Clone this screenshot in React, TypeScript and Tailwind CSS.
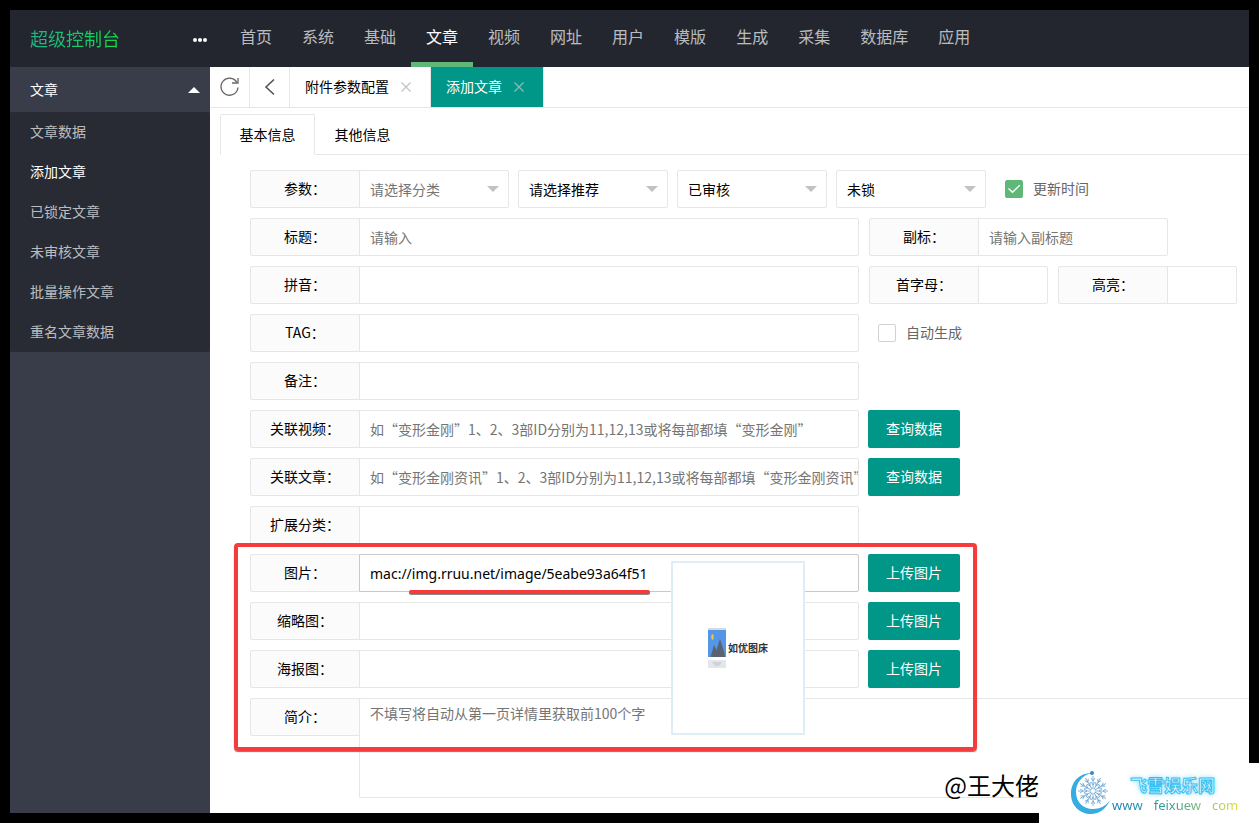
import { useState, type ReactNode } from 'react'

const NAV_ITEMS = ['首页', '系统', '基础', '文章', '视频', '网址', '用户', '模版', '生成', '采集', '数据库', '应用']
const SIDE_ITEMS = ['文章数据', '添加文章', '已锁定文章', '未审核文章', '批量操作文章', '重名文章数据']
const INNER_TABS = ['基本信息', '其他信息']

function RefreshIcon() {
  return (
    <svg width="22" height="22" viewBox="0 0 22 22" fill="none" stroke="#666" strokeWidth="1.3" aria-hidden="true">
      <path d="M19 11.500A8.500 8.500 0 1 1 17.800 6.300" />
      <path d="M19 2v5h-6" />
    </svg>
  )
}

function BackIcon() {
  return (
    <svg width="20" height="20" viewBox="0 0 20 20" fill="none" stroke="#555" strokeWidth="1.6" aria-hidden="true">
      <path d="M14 2.500 6 10l8 7.500" />
    </svg>
  )
}

function CloseIcon({ color }: { color: string }) {
  return (
    <svg width="10" height="10" viewBox="0 0 10 10" fill="none" stroke={color} strokeWidth="1.2" aria-hidden="true">
      <path d="M.5.5l9 9M9.500.5l-9 9" />
    </svg>
  )
}

interface WindowTabProps {
  label: string
  active?: boolean
}

function WindowTab({ label, active = false }: WindowTabProps) {
  return (
    <div
      className={`flex h-full items-center gap-3 border-r border-[#e6e6e6] pl-[15px] pr-[19px] ${
        active ? 'bg-[#009688] text-white' : 'bg-white text-black'
      }`}
    >
      <a href="#tab" className="pb-[2px]">
        {label}
      </a>
      <button type="button" aria-label={`关闭${label}`}>
        <CloseIcon color={active ? '#8fbdb6' : '#c2c2c2'} />
      </button>
    </div>
  )
}

function Row({ children }: { children: ReactNode }) {
  return <div className="flex items-start">{children}</div>
}

function FieldLabel({ id, children }: { id: string; children: ReactNode }) {
  return (
    <label
      htmlFor={id}
      className="flex h-[38px] w-[110px] shrink-0 items-center justify-center rounded-l-xs border border-[#e6e6e6] bg-[#fbfbfb] pb-[2px] text-black"
    >
      {children}
    </label>
  )
}

interface TextFieldProps {
  id: string
  label: string
  width?: string
  placeholder?: string
}

function TextField({ id, label, width = 'w-[500px]', placeholder }: TextFieldProps) {
  return (
    <div className="flex shrink-0">
      <FieldLabel id={id}>{label}</FieldLabel>
      <input
        id={id}
        type="text"
        placeholder={placeholder}
        className={`-ml-px h-[38px] ${width} rounded-r-xs border border-[#e6e6e6] bg-white pl-[10px] placeholder:text-[#757575] focus:outline-none`}
      />
    </div>
  )
}

interface SelectFieldProps {
  id: string
  name: string
  options: string[]
  muted?: boolean
}

function SelectField({ id, name, options, muted = false }: SelectFieldProps) {
  return (
    <div className="relative w-[150px] shrink-0">
      <select
        id={id}
        aria-label={name}
        className={`h-[38px] w-full appearance-none rounded-xs border border-[#e6e6e6] bg-white px-[10px] focus:outline-none ${
          muted ? 'text-[#757575]' : 'text-black'
        }`}
      >
        {options.map((o) => (
          <option key={o}>{o}</option>
        ))}
      </select>
      <span className="pointer-events-none absolute right-[10px] top-4 border-x-6 border-t-6 border-x-transparent border-t-[#c2c2c2]" />
    </div>
  )
}

function CheckField({ id, label, checked = false }: { id: string; label: string; checked?: boolean }) {
  return (
    <div className="flex h-[38px] shrink-0 items-center gap-[10px] text-[#666]">
      <span className="relative flex">
        <input
          id={id}
          type="checkbox"
          defaultChecked={checked}
          className="peer size-[18px] appearance-none rounded-xs border border-[#d2d2d2] bg-white checked:border-[#5fb878] checked:bg-[#5fb878]"
        />
        <svg
          className="pointer-events-none absolute inset-0 hidden peer-checked:block"
          width="18"
          height="18"
          viewBox="0 0 18 18"
          fill="none"
          stroke="#fff"
          strokeWidth="1.4"
          aria-hidden="true"
        >
          <path d="M3.500 8.500 7.500 12.300 14.800 5.200" />
        </svg>
      </span>
      <label htmlFor={id} className="pb-[2px]">
        {label}
      </label>
    </div>
  )
}

function ActionButton({ children }: { children: ReactNode }) {
  return (
    <button type="button" className="ml-[9px] h-[38px] w-[92px] shrink-0 rounded-xs bg-[#009688] pb-[2px] text-white">
      {children}
    </button>
  )
}

/** Floating preview of the picture behind the address in the 图片 field. */
function PicturePreview() {
  return (
    <div className="absolute left-[421px] top-[7px] z-10 flex h-[174px] w-[134px] items-center justify-center gap-[2px] border-2 border-[#deeef9] bg-white">
      <svg width="18" height="42" viewBox="0 0 18 42" aria-hidden="true">
        <rect y="1" width="18" height="3" fill="#d5d9e0" />
        <rect y="3" width="18" height="27" fill="#5596e6" />
        <ellipse cx="4.500" cy="10" rx="1.300" ry="3" fill="#e6c34a" />
        <path d="M2.500 30 6 18l2.500 5L12 12l4.500 14 .5 4z" fill="#5b6270" />
        <rect y="33" width="18" height="8" fill="#e3e6ea" />
        <path d="M4 35h10l-3 4H7z" fill="#cfd3d9" />
      </svg>
      <span className="text-[10px] font-bold text-[#333]">如优图床</span>
    </div>
  )
}

function SnowMoonLogo() {
  const arms = Array.from({ length: 12 }, (_, i) => i * 30)
  return (
    <svg width="40" height="44" viewBox="0 0 40 44" aria-hidden="true">
      <path
        d="M21 2C8 2 0 11 0 23c0 12 9 20 20 20 8 0 15-5 19-14-4 6-10 9-17 9C12 38 5 31 5 21 5 12 11 4 21 2z"
        fill="#35ace2"
      />
      <g stroke="#6aa3d0" strokeWidth="0.8" fill="none">
        {arms.map((deg) => (
          <path
            key={deg}
            d="M22 20V5M22 10l-2-3M22 10l2-3M22 14l-2-3M22 14l2-3"
            transform={`rotate(${deg} 22 20)`}
          />
        ))}
      </g>
      <circle cx="22" cy="20" r="2" fill="#fff" />
      <circle cx="21" cy="2" r="2" fill="#3c86bd" />
    </svg>
  )
}

function SiteBadge() {
  return (
    <div className="absolute bottom-0 right-0 z-20 flex h-[60px] w-[220px] items-center bg-white pl-8">
      <SnowMoonLogo />
      <div className="flex flex-col pl-px pt-1">
        <span className="pl-[18px] text-[17px] font-bold leading-5 text-[#e6faff] [-webkit-text-stroke:1px_#38bff2] [text-shadow:0_0_4px_#8fe0fc,0_0_6px_#a5e8ff]">
          飞雪娱乐网
        </span>
        <span className="flex gap-[11px] bg-gradient-to-r from-[#1780b8] via-[#38a08e] to-[#e0dc30] bg-clip-text font-['Noto_Sans'] text-[13px] leading-5 text-transparent">
          <span>www</span>
          <span>feixuew</span>
          <span>com</span>
        </span>
      </div>
    </div>
  )
}

export default function App() {
  const [nav, setNav] = useState('文章')
  const [innerTab, setInnerTab] = useState('基本信息')

  return (
    <div className="relative flex min-h-screen flex-col overflow-hidden bg-black p-[10px] font-['Noto_Sans_CJK_SC',sans-serif] text-[14px] leading-5">
      <header className="flex h-[57px] shrink-0 bg-[#23262e]">
        <div className="flex w-[215px] shrink-0 items-center justify-between pl-5 pr-[18px]">
          <h1 className="bg-gradient-to-r from-[#21b285] to-[#10dc45] bg-clip-text pb-[2px] text-[18px] leading-7 text-transparent">
            超级控制台
          </h1>
          <button type="button" aria-label="收起菜单" className="mt-[2px] flex gap-px">
            <span className="size-1 rounded-full bg-white" />
            <span className="size-1 rounded-full bg-white" />
            <span className="size-1 rounded-full bg-white" />
          </button>
        </div>
        <nav className="flex text-[16px]">
          {NAV_ITEMS.map((item) => (
            <a
              key={item}
              href="#nav"
              onClick={() => setNav(item)}
              className={`flex items-center whitespace-nowrap border-b-5 px-[15px] ${
                nav === item ? 'border-[#5fb878] text-white' : 'border-transparent text-white/70'
              }`}
            >
              {item}
            </a>
          ))}
        </nav>
      </header>

      <div className="flex grow">
        <aside className="w-[200px] shrink-0 bg-[#393d49]">
          <a href="#group" className="flex h-[45px] items-center justify-between pl-5 pr-[10px] text-white">
            <span className="pb-[2px]">文章</span>
            <span className="border-x-6 border-b-6 border-x-transparent border-b-white" />
          </a>
          <ul className="rounded-xs bg-[#282b33]">
            {SIDE_ITEMS.map((item) => (
              <li key={item}>
                <a
                  href="#side"
                  className={`flex h-10 items-center pb-[2px] pl-5 ${item === '添加文章' ? 'text-white' : 'text-white/70'}`}
                >
                  {item}
                </a>
              </li>
            ))}
          </ul>
        </aside>

        <main className="min-w-0 flex-1 bg-white">
          <div className="flex h-[41px] border-b border-[#e6e6e6]">
            <button type="button" aria-label="刷新" className="flex w-10 items-center justify-center border-r border-[#e6e6e6]">
              <RefreshIcon />
            </button>
            <button type="button" aria-label="后退" className="flex w-10 items-center justify-center border-r border-[#e6e6e6]">
              <BackIcon />
            </button>
            <WindowTab label="附件参数配置" />
            <WindowTab label="添加文章" active />
          </div>

          <div className="mt-[6px] pl-[10px]">
            <div role="tablist" className="flex h-[41px]">
              {INNER_TABS.map((tab) => (
                <button
                  key={tab}
                  type="button"
                  role="tab"
                  aria-selected={innerTab === tab}
                  onClick={() => setInnerTab(tab)}
                  className={`w-[95px] shrink-0 rounded-t-xs border pb-[2px] ${
                    innerTab === tab
                      ? 'border-[#e6e6e6] border-b-transparent'
                      : 'border-transparent border-b-[#e6e6e6]'
                  }`}
                >
                  {tab}
                </button>
              ))}
              <div className="flex-1 border-b border-[#e6e6e6]" />
            </div>

            <form className="relative flex flex-col gap-[10px] pb-[15px] pl-[30px] pt-[15px]">
              <Row>
                <FieldLabel id="category">参数：</FieldLabel>
                <div className="-ml-px flex gap-[9px]">
                  <SelectField id="category" name="分类" options={['请选择分类']} muted />
                  <SelectField id="level" name="推荐" options={['请选择推荐']} />
                  <SelectField id="status" name="审核" options={['已审核', '未审核']} />
                  <SelectField id="lock" name="锁定" options={['未锁', '已锁']} />
                  <div className="pl-[10px]">
                    <CheckField id="uptime" label="更新时间" checked />
                  </div>
                </div>
              </Row>
              <Row>
                <div className="flex gap-[10px]">
                  <TextField id="title" label="标题：" placeholder="请输入" />
                  <TextField id="subtitle" label="副标：" placeholder="请输入副标题" width="w-[190px]" />
                </div>
              </Row>
              <Row>
                <div className="flex gap-[10px]">
                  <TextField id="pinyin" label="拼音：" />
                  <TextField id="letter" label="首字母：" width="w-[70px]" />
                  <TextField id="color" label="高亮：" width="w-[70px]" />
                </div>
              </Row>
              <Row>
                <div className="flex gap-[19px]">
                  <TextField id="tag" label="TAG：" />
                  <CheckField id="autotag" label="自动生成" />
                </div>
              </Row>
              <Row>
                <TextField id="remarks" label="备注：" />
              </Row>
              <Row>
                <TextField
                  id="rel-vod"
                  label="关联视频："
                  placeholder="如“变形金刚”1、2、3部ID分别为11,12,13或将每部都填“变形金刚”"
                />
                <ActionButton>查询数据</ActionButton>
              </Row>
              <Row>
                <TextField
                  id="rel-art"
                  label="关联文章："
                  placeholder="如“变形金刚资讯”1、2、3部ID分别为11,12,13或将每部都填“变形金刚资讯”"
                />
                <ActionButton>查询数据</ActionButton>
              </Row>
              <Row>
                <TextField id="extend" label="扩展分类：" />
              </Row>
              <div className="relative flex">
                <FieldLabel id="pic">图片：</FieldLabel>
                <input
                  id="pic"
                  type="text"
                  defaultValue="mac://img.rruu.net/image/5eabe93a64f51"
                  className="-ml-px h-[38px] w-[500px] shrink-0 rounded-r-xs border border-[#c9c9c9] bg-white pl-[10px] font-['Noto_Sans'] text-black focus:outline-none"
                />
                <ActionButton>上传图片</ActionButton>
                <span className="absolute left-[159px] top-9 h-1 w-[241px] rounded-full bg-[#f53b3b] shadow-[0_1px_0_#8a8a8a]" />
                <PicturePreview />
              </div>
              <Row>
                <TextField id="thumb" label="缩略图：" />
                <ActionButton>上传图片</ActionButton>
              </Row>
              <Row>
                <TextField id="poster" label="海报图：" />
                <ActionButton>上传图片</ActionButton>
              </Row>
              <Row>
                <FieldLabel id="blurb">简介：</FieldLabel>
                <textarea
                  id="blurb"
                  placeholder="不填写将自动从第一页详情里获取前100个字"
                  className="-ml-px h-[100px] min-w-0 flex-1 resize-none rounded-l-xs border border-r-0 border-[#e6e6e6] bg-white px-[10px] py-1 placeholder:text-[#757575] focus:outline-none"
                />
              </Row>

              {/* Highlight round the picture fields */}
              <div className="pointer-events-none absolute bottom-[62px] left-[14px] h-[208px] w-[743px] rounded-sm border-4 border-[#f53b3b] shadow-[0_1px_1px_#777]" />
            </form>
          </div>
        </main>
      </div>

      <span className="absolute bottom-5 right-[220px] z-10 text-[24px] leading-9 text-black">@王大佬</span>
      <SiteBadge />
    </div>
  )
}
